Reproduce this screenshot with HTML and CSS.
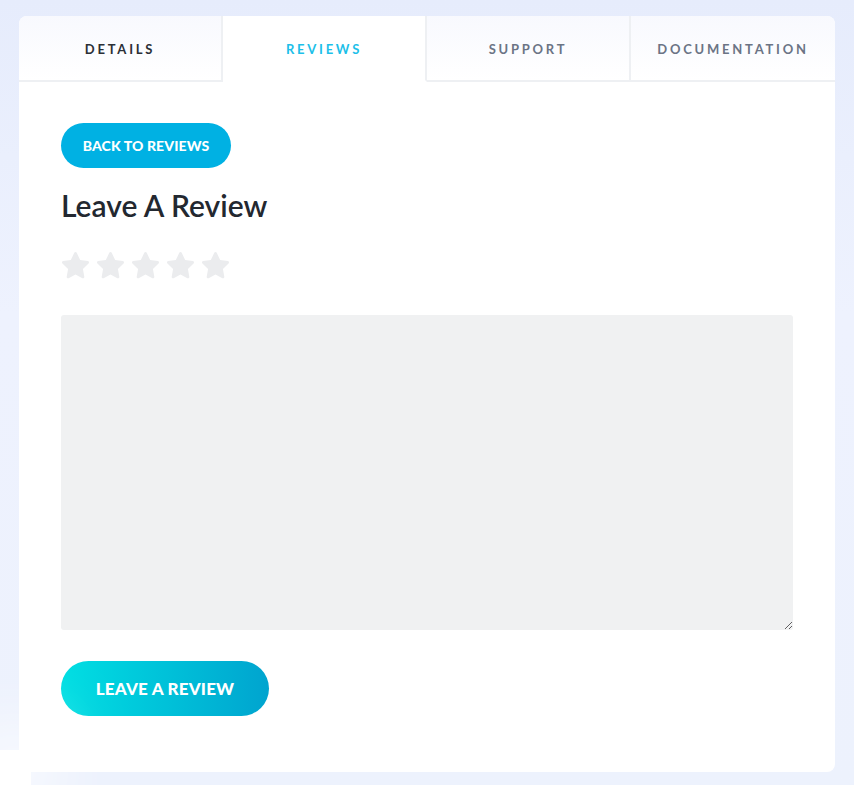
FILE: index.html
```html
<!DOCTYPE html>
<html lang="en">
<head>
<meta charset="utf-8">
<title>Leave A Review</title>
<link rel="stylesheet" href="styles.css">
</head>
<body>
<div class="page">
  <div class="card">
    <nav class="tabs">
      <div class="tab tab-dark">DETAILS</div>
      <div class="tab tab-active">REVIEWS</div>
      <div class="tab">SUPPORT</div>
      <div class="tab">DOCUMENTATION</div>
    </nav>
    <div class="content">
      <a class="btn-back" href="#">BACK TO REVIEWS</a>
      <h2 class="title">Leave A Review</h2>
      <div class="stars">
        <svg class="star" viewBox="0 0 24 24"><path d="M12 2.2c.4 0 .7.2.9.6l2.5 5.2 5.6.8c.8.1 1.1 1.1.5 1.7l-4.1 4 1 5.7c.1.8-.7 1.4-1.4 1l-5-2.7-5 2.7c-.7.4-1.5-.2-1.4-1l1-5.7-4.1-4c-.6-.6-.3-1.6.5-1.7l5.6-.8 2.5-5.2c.2-.4.5-.6.9-.6z"/></svg>
        <svg class="star" viewBox="0 0 24 24"><path d="M12 2.2c.4 0 .7.2.9.6l2.5 5.2 5.6.8c.8.1 1.1 1.1.5 1.7l-4.1 4 1 5.7c.1.8-.7 1.4-1.4 1l-5-2.7-5 2.7c-.7.4-1.5-.2-1.4-1l1-5.7-4.1-4c-.6-.6-.3-1.6.5-1.7l5.6-.8 2.5-5.2c.2-.4.5-.6.9-.6z"/></svg>
        <svg class="star" viewBox="0 0 24 24"><path d="M12 2.2c.4 0 .7.2.9.6l2.5 5.2 5.6.8c.8.1 1.1 1.1.5 1.7l-4.1 4 1 5.7c.1.8-.7 1.4-1.4 1l-5-2.7-5 2.7c-.7.4-1.5-.2-1.4-1l1-5.7-4.1-4c-.6-.6-.3-1.6.5-1.7l5.6-.8 2.5-5.2c.2-.4.5-.6.9-.6z"/></svg>
        <svg class="star" viewBox="0 0 24 24"><path d="M12 2.2c.4 0 .7.2.9.6l2.5 5.2 5.6.8c.8.1 1.1 1.1.5 1.7l-4.1 4 1 5.7c.1.8-.7 1.4-1.4 1l-5-2.7-5 2.7c-.7.4-1.5-.2-1.4-1l1-5.7-4.1-4c-.6-.6-.3-1.6.5-1.7l5.6-.8 2.5-5.2c.2-.4.5-.6.9-.6z"/></svg>
        <svg class="star" viewBox="0 0 24 24"><path d="M12 2.2c.4 0 .7.2.9.6l2.5 5.2 5.6.8c.8.1 1.1 1.1.5 1.7l-4.1 4 1 5.7c.1.8-.7 1.4-1.4 1l-5-2.7-5 2.7c-.7.4-1.5-.2-1.4-1l1-5.7-4.1-4c-.6-.6-.3-1.6.5-1.7l5.6-.8 2.5-5.2c.2-.4.5-.6.9-.6z"/></svg>
      </div>
      <textarea class="review-text"></textarea>
      <button class="btn-submit" type="button">LEAVE A REVIEW</button>
    </div>
  </div>
</div>
<div class="corner-widget"></div>
</body>
</html>
```

FILE: styles.css
```css
* { box-sizing: border-box; }
html, body { margin: 0; padding: 0; }
body {
  position: relative;
  width: 854px;
  height: 785px;
  overflow: hidden;
  background: linear-gradient(180deg, #e6ecfc 0%, #eef2fe 40%, #edf2fd 100%);
  font-family: Lato, "Open Sans", sans-serif;
}
.page {
  padding: 16px 19px 0 19px;
}
.card {
  background: #fff;
  border-radius: 8px;
  height: 756px;
  overflow: hidden;
}
.tabs {
  display: grid;
  grid-template-columns: repeat(4, 1fr);
  height: 66px;
}
.tab {
  display: flex;
  align-items: center;
  justify-content: center;
  font-size: 13px;
  font-weight: 700;
  letter-spacing: 2.75px;
  color: #6b7485;
  background: linear-gradient(180deg, #f8f9fe 0%, #ffffff 100%);
  border-bottom: 2px solid #eef0f3;
  border-right: 2px solid #eef0f3;
  padding-top: 2px;
}
.tab:last-child { border-right: none; }
.tab-dark { color: #2b2f36; }
.tab-active {
  color: #1dbfe9;
  background: #fff;
  border-bottom-color: transparent;
}
.content {
  padding: 41px 42px 0 42px;
}
.btn-back {
  display: inline-flex;
  align-items: center;
  justify-content: center;
  width: 170px;
  height: 45px;
  border-radius: 23px;
  background: #00b1e3;
  color: #fff;
  font-size: 14px;
  font-weight: 900;
  text-decoration: none;
  letter-spacing: 0.1px;
}
.title {
  margin: 19px 0 0 0;
  font-size: 30px;
  line-height: 36px;
  font-weight: 600;
  color: #232830;
}
.stars {
  display: flex;
  gap: 2px;
  margin-top: 26px;
  margin-left: -2px;
}
.star {
  display: block;
  width: 33px;
  height: 33px;
  fill: #ebecee;
}
.review-text {
  display: block;
  width: 732px;
  height: 315px;
  margin-top: 33px;
  border: none;
  border-radius: 3px;
  background: #f0f1f2;
  outline: none;
  resize: vertical;
}
.btn-submit {
  display: flex;
  align-items: center;
  justify-content: center;
  margin-top: 31px;
  width: 208px;
  height: 55px;
  border: none;
  border-radius: 28px;
  background: linear-gradient(90deg, #00dfe3 0%, #00a4cf 100%);
  color: #fff;
  font-family: Lato, sans-serif;
  font-size: 17px;
  font-weight: 900;
  letter-spacing: 0.2px;
}
.corner-widget {
  position: absolute;
  left: 0;
  top: 750px;
  width: 31px;
  height: 35px;
  background: #fff;
  border-top-right-radius: 10px;
  box-shadow: 0 0 60px 30px rgba(255,255,255,0.6);
}
```
